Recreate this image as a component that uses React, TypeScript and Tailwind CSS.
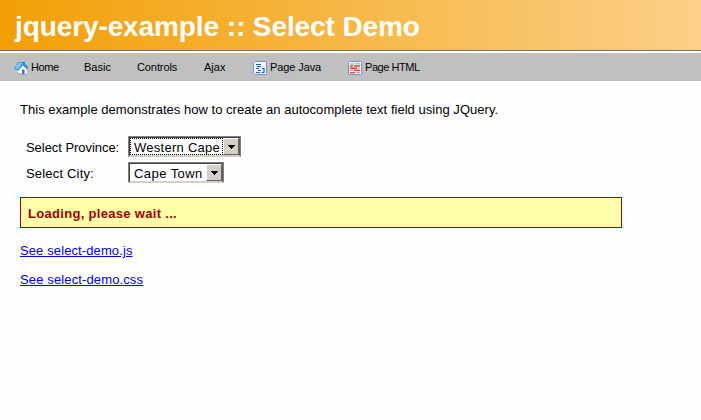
import React from "react";

function HomeIcon() {
  return (
    <svg className="relative top-px h-[14px] w-[14px] shrink-0" viewBox="0 0 14 14">
      <path d="M9 1h2v3H9z" fill="#2f6fb5" />
      <path d="M2 7 7 2.5l5 4.5v6H5L2 10.5z" fill="#f4f8fc" />
      <path d="M0 7 4 1.2 9 .8l5 5v2l-1 .5-4.2-3.8L4.7 9.5 3 9.7z" fill="#3c8fdc" />
      <path d="M.8 6.7 4.5 1.8l4 .2L4 8.2z" fill="#83c3f3" />
      <path d="M5 9.5 8.8 5.8 12.7 9v4.2L5 12.5z" fill="#f7fbff" />
      <path d="M8 8.5h2.5v4.7H8z" fill="#3478c4" />
      <path d="M2.5 10.2 5 12.9l8 .4" fill="none" stroke="#7395b8" strokeWidth=".8" />
    </svg>
  );
}

function JavaIcon() {
  return (
    <svg className="relative top-px h-[14px] w-[14px] shrink-0" viewBox="0 0 14 14">
      <rect x=".5" y=".5" width="13" height="13" rx="1" fill="#eef6ff" stroke="#6f92d0" />
      <path d="M3 3.5h5M4 5.5h4M3 7.5h3M5 9.5h3M3 11.5h4" stroke="#1763bd" strokeWidth="1.2" />
      <path d="M9 7.5h2v4H8.5" fill="none" stroke="#1763bd" strokeWidth="1.2" />
    </svg>
  );
}

function HtmlIcon() {
  return (
    <svg className="relative top-px h-[14px] w-[14px] shrink-0" viewBox="0 0 14 14">
      <rect x=".5" y=".5" width="13" height="13" rx="1" fill="#eef6ff" stroke="#6f92d0" />
      <path d="M7 2.8h5M2 3h4M10 7.2h2M2 9.4h3M8 11.6h4" stroke="#8f9dbb" />
      <path d="M6 5h6M2 7.2h7M6 9.4h6M2 11.6h5M2 5h3" stroke="#f33b12" strokeWidth="1.4" />
    </svg>
  );
}

function SelectBox({ value, focused, className }: { value: string; focused?: boolean; className: string }) {
  return (
    <div className={`flex h-[21px] border border-t-[#808080] border-l-[#808080] border-r-[#808080] border-b-[#d4d0c8] ${className}`}>
      <div className="flex min-w-0 flex-1 border border-t-[#404040] border-l-[#404040] border-r-[#606060] border-b-[#d4d0c8] bg-white">
        <div className={`flex min-w-0 flex-1 items-center border border-dotted pt-px pl-[3px] whitespace-nowrap ${focused ? "border-black" : "border-transparent"}`}>
          {value}
        </div>
        <div className="flex w-4 shrink-0 items-center justify-center border border-t-white border-l-white border-r-[#606060] border-b-[#606060] bg-[#d4d0c8]">
          <svg className="h-1 w-[7px]" viewBox="0 0 7 4" shapeRendering="crispEdges">
            <path d="M0 0h7v1H0zM1 1h5v1H1zM2 2h3v1H2zM3 3h1v1H3z" />
          </svg>
        </div>
      </div>
    </div>
  );
}

export default function App() {
  return (
    <div className="h-[420px] w-[701px] overflow-hidden bg-[#fefefe] font-['Liberation_Sans',Arial,sans-serif] text-[13px] leading-[15px] text-black">
      <header className="flex h-[51px] items-center border-b border-[#6f6f6f] bg-linear-to-r/srgb from-[#f29f05] to-[#fbd089] pt-[3px] pl-[15px]">
        <h1 className="text-[28px] leading-[32px] font-bold tracking-[-0.1px] whitespace-nowrap text-white">jquery-example :: Select Demo</h1>
      </header>
      <nav className="mt-[2px] flex h-7 items-center bg-[#c0c0c0] pl-[14px] text-[11px] whitespace-nowrap">
        <a className="flex w-[70px] items-center gap-[3px] tracking-[-0.4px]"><HomeIcon />Home</a>
        <a className="w-[53px]">Basic</a>
        <a className="w-[67px] tracking-[-0.1px]">Controls</a>
        <a className="w-[49px]">Ajax</a>
        <a className="flex w-[95px] items-center gap-[3px] tracking-[-0.1px]"><JavaIcon />Page Java</a>
        <a className="flex items-center gap-[3px] tracking-[-0.45px]"><HtmlIcon />Page HTML</a>
      </nav>
      <main className="pt-[21px] pl-5 whitespace-nowrap">
        <p className="tracking-[0.027px]">This example demonstrates how to create an autocomplete text field using JQuery.</p>
        <div className="mt-[19px] flex h-[21px] items-center pl-[6px]">
          <label className="w-[102px] pt-[2px] tracking-[-0.05px]">Select Province:</label>
          <SelectBox value="Western Cape" focused className="w-[113px] tracking-[0.27px]" />
        </div>
        <div className="mt-[5px] flex h-[21px] items-center pl-[6px]">
          <label className="w-[102px] pt-[2px] tracking-[0.18px]">Select City:</label>
          <SelectBox value="Cape Town" className="w-24 tracking-[0.44px]" />
        </div>
        <div className="mt-[14px] flex h-[31px] w-[602px] items-center border border-[#a00000] bg-[#ffffaa] pt-[2px] pl-[7px] font-bold tracking-[0.31px] text-[#a00000]">
          <span>Loading, please wait ...</span>
        </div>
        <p className="mt-[15px]"><a className="tracking-[0.11px] text-[#0000ee] underline">See select-demo.js</a></p>
        <p className="mt-[14px]"><a className="tracking-[0.13px] text-[#0000ee] underline">See select-demo.css</a></p>
      </main>
    </div>
  );
}
